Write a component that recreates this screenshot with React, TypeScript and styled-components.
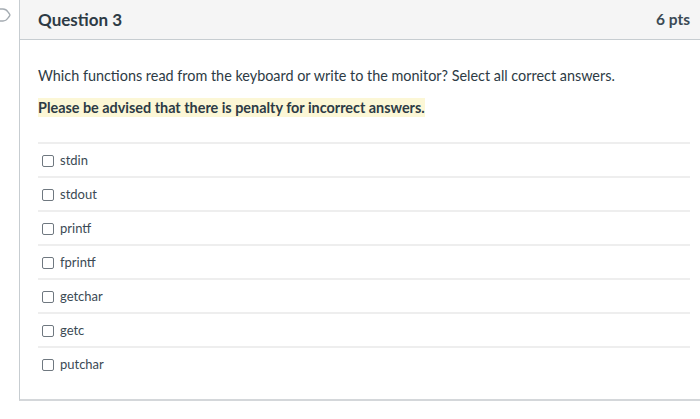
import React from "react";
import styled, { createGlobalStyle } from "styled-components";

const Global = createGlobalStyle`
  html, body { margin: 0; padding: 0; background: #ffffff; overflow: hidden; }
  body { font-family: Lato, "Open Sans", sans-serif; color: #2d3b45; }
`;

const Page = styled.div`
  position: relative;
  width: 700px;
  height: 419px;
  overflow: hidden;
  background: #fff;
`;

const FlagIcon = styled.svg`
  position: absolute;
  left: -8px;
  top: 8px;
`;

const Card = styled.div`
  margin-left: 19px;
  width: 689px;
  height: 401px;
  box-sizing: border-box;
  border-left: 1px solid #c7cdd1;
  border-bottom: 2px solid #d4d7da;
  display: flex;
  flex-direction: column;
`;

const Header = styled.div`
  height: 40px;
  box-sizing: border-box;
  background: #f5f5f5;
  border-bottom: 1px solid #c7cdd1;
  display: flex;
  align-items: center;
  justify-content: space-between;
  padding: 0 18px 0 18px;
`;

const Title = styled.div`
  font-size: 17px;
  font-weight: 700;
  color: #2d3b45;
  margin-top: -1px;
`;

const Points = styled.div`
  font-size: 15.5px;
  font-weight: 700;
  color: #3b4a54;
  margin-top: -1px;
`;

const Body = styled.div`
  padding: 26px 0 0 18px;
  width: 652px;
  font-size: 14.4px;
`;

const Prompt = styled.p`
  margin: 0;
  line-height: 20px;
  color: #2d3b45;
`;

const Warning = styled.p`
  margin: 12px 0 0;
  line-height: 20px;
  font-weight: 700;
  color: #2d3b45;
`;

const Highlight = styled.span`
  background: #fcf7d6;
  padding: 1px 0;
`;

const Answers = styled.div`
  margin-top: 24px;
  display: flex;
  flex-direction: column;
`;

const Answer = styled.label`
  display: flex;
  align-items: center;
  gap: 6px;
  height: 34px;
  box-sizing: border-box;
  border-top: 2px solid #eeeeee;
  padding-left: 4px;
  font-size: 13px;
  color: #3b4a54;
`;

const Box = styled.span`
  width: 12px;
  height: 12px;
  box-sizing: border-box;
  border: 1.5px solid #6f7880;
  border-radius: 2px;
  background: #fff;
  margin-top: 1px;
`;

const answers = ["stdin", "stdout", "printf", "fprintf", "getchar", "getc", "putchar"];

export default function App() {
  return (
    <Page>
      <Global />
      <FlagIcon width="20" height="14" viewBox="0 0 20 14">
        <path
          d="M1 1 H11 Q14 1 16 4 L17.5 6 Q18.3 7 17.5 8 L16 10 Q14 13 11 13 H1 Z"
          fill="none"
          stroke="#a5acb2"
          strokeWidth="1.3"
        />
      </FlagIcon>
      <Card>
        <Header>
          <Title>Question 3</Title>
          <Points>6 pts</Points>
        </Header>
        <Body>
          <Prompt>
            Which functions read from the keyboard or write to the monitor? Select all correct answers.
          </Prompt>
          <Warning>
            <Highlight>Please be advised that there is penalty for incorrect answers.</Highlight>
          </Warning>
          <Answers>
            {answers.map((a) => (
              <Answer key={a}>
                <Box />
                {a}
              </Answer>
            ))}
          </Answers>
        </Body>
      </Card>
    </Page>
  );
}
